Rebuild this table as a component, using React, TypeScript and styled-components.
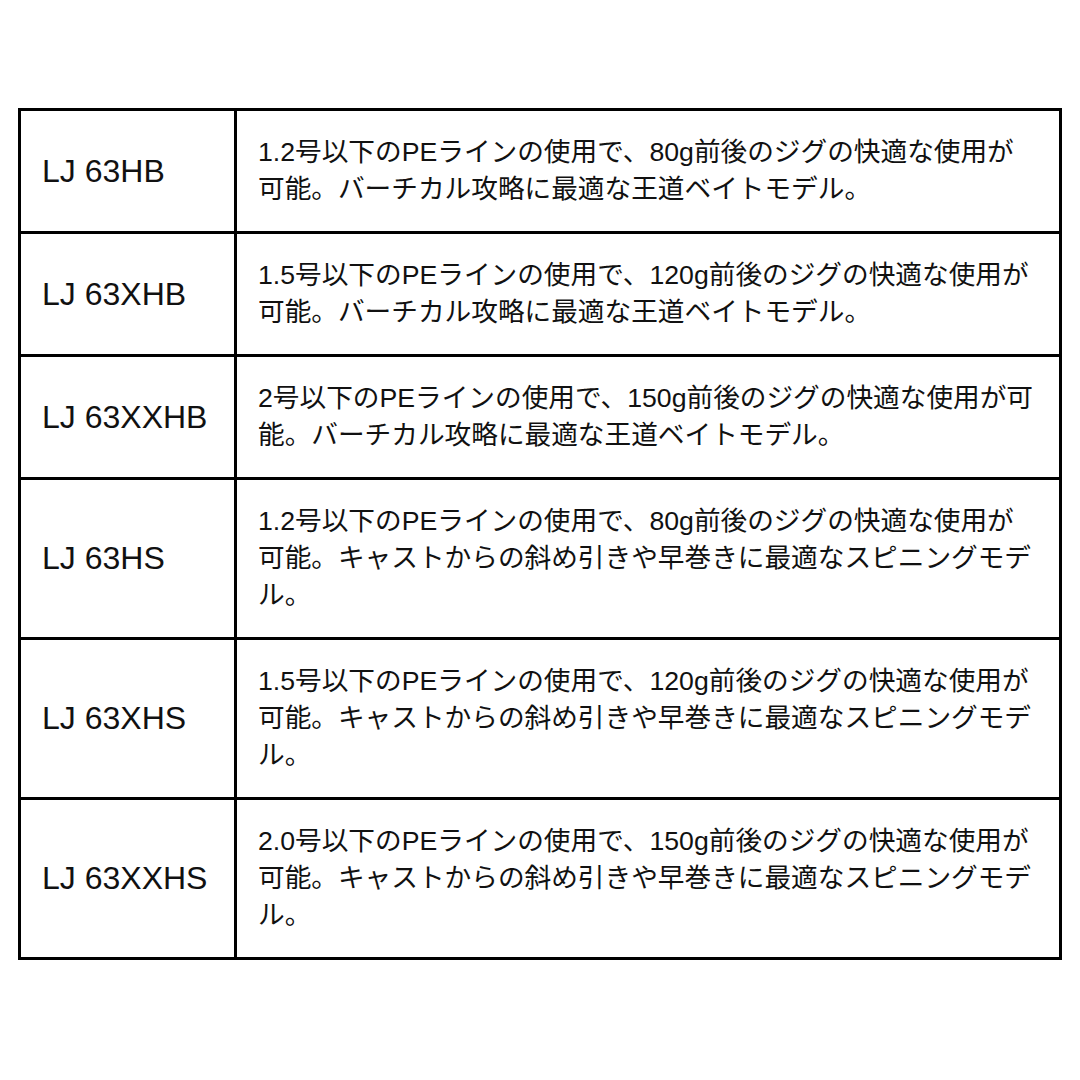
import React from "react";
import styled, { createGlobalStyle } from "styled-components";

const Global = createGlobalStyle`
  html, body { margin: 0; padding: 0; background: #fff; }
  body { width: 1080px; height: 1080px; }
`;

const Page = styled.div`
  width: 1080px;
  height: 1080px;
  box-sizing: border-box;
  padding: 108px 18px 0 18px;
  background: #fff;
`;

const Table = styled.div`
  display: grid;
  grid-template-columns: 213px 822px;
  gap: 3px;
  padding: 3px;
  background: #000;
  width: 1044px;
  box-sizing: border-box;
`;

const Cell = styled.div`
  background: #fff;
  display: flex;
  align-items: center;
  box-sizing: border-box;
  color: #111;
`;

const ModelCell = styled(Cell)`
  padding: 23px 6px 23px 21px;
  font-family: "Liberation Sans", Arial, sans-serif;
  font-size: 32px;
  line-height: 37px;
`;

const DescCell = styled(Cell)`
  padding: 23px 23px 23px 21px;
  font-family: "Liberation Sans", "Noto Sans CJK JP", sans-serif;
  font-size: 26.67px;
  line-height: 37px;
`;

const rows: { model: string; desc: string }[] = [
  { model: "LJ 63HB", desc: "1.2号以下のPEラインの使用で、80g前後のジグの快適な使用が可能。バーチカル攻略に最適な王道ベイトモデル。" },
  { model: "LJ 63XHB", desc: "1.5号以下のPEラインの使用で、120g前後のジグの快適な使用が可能。バーチカル攻略に最適な王道ベイトモデル。" },
  { model: "LJ 63XXHB", desc: "2号以下のPEラインの使用で、150g前後のジグの快適な使用が可能。バーチカル攻略に最適な王道ベイトモデル。" },
  { model: "LJ 63HS", desc: "1.2号以下のPEラインの使用で、80g前後のジグの快適な使用が可能。キャストからの斜め引きや早巻きに最適なスピニングモデル。" },
  { model: "LJ 63XHS", desc: "1.5号以下のPEラインの使用で、120g前後のジグの快適な使用が可能。キャストからの斜め引きや早巻きに最適なスピニングモデル。" },
  { model: "LJ 63XXHS", desc: "2.0号以下のPEラインの使用で、150g前後のジグの快適な使用が可能。キャストからの斜め引きや早巻きに最適なスピニングモデル。" },
];

export default function App() {
  return (
    <>
      <Global />
      <Page>
        <Table>
          {rows.map((r) => (
            <React.Fragment key={r.model}>
              <ModelCell>{r.model}</ModelCell>
              <DescCell>{r.desc}</DescCell>
            </React.Fragment>
          ))}
        </Table>
      </Page>
    </>
  );
}
